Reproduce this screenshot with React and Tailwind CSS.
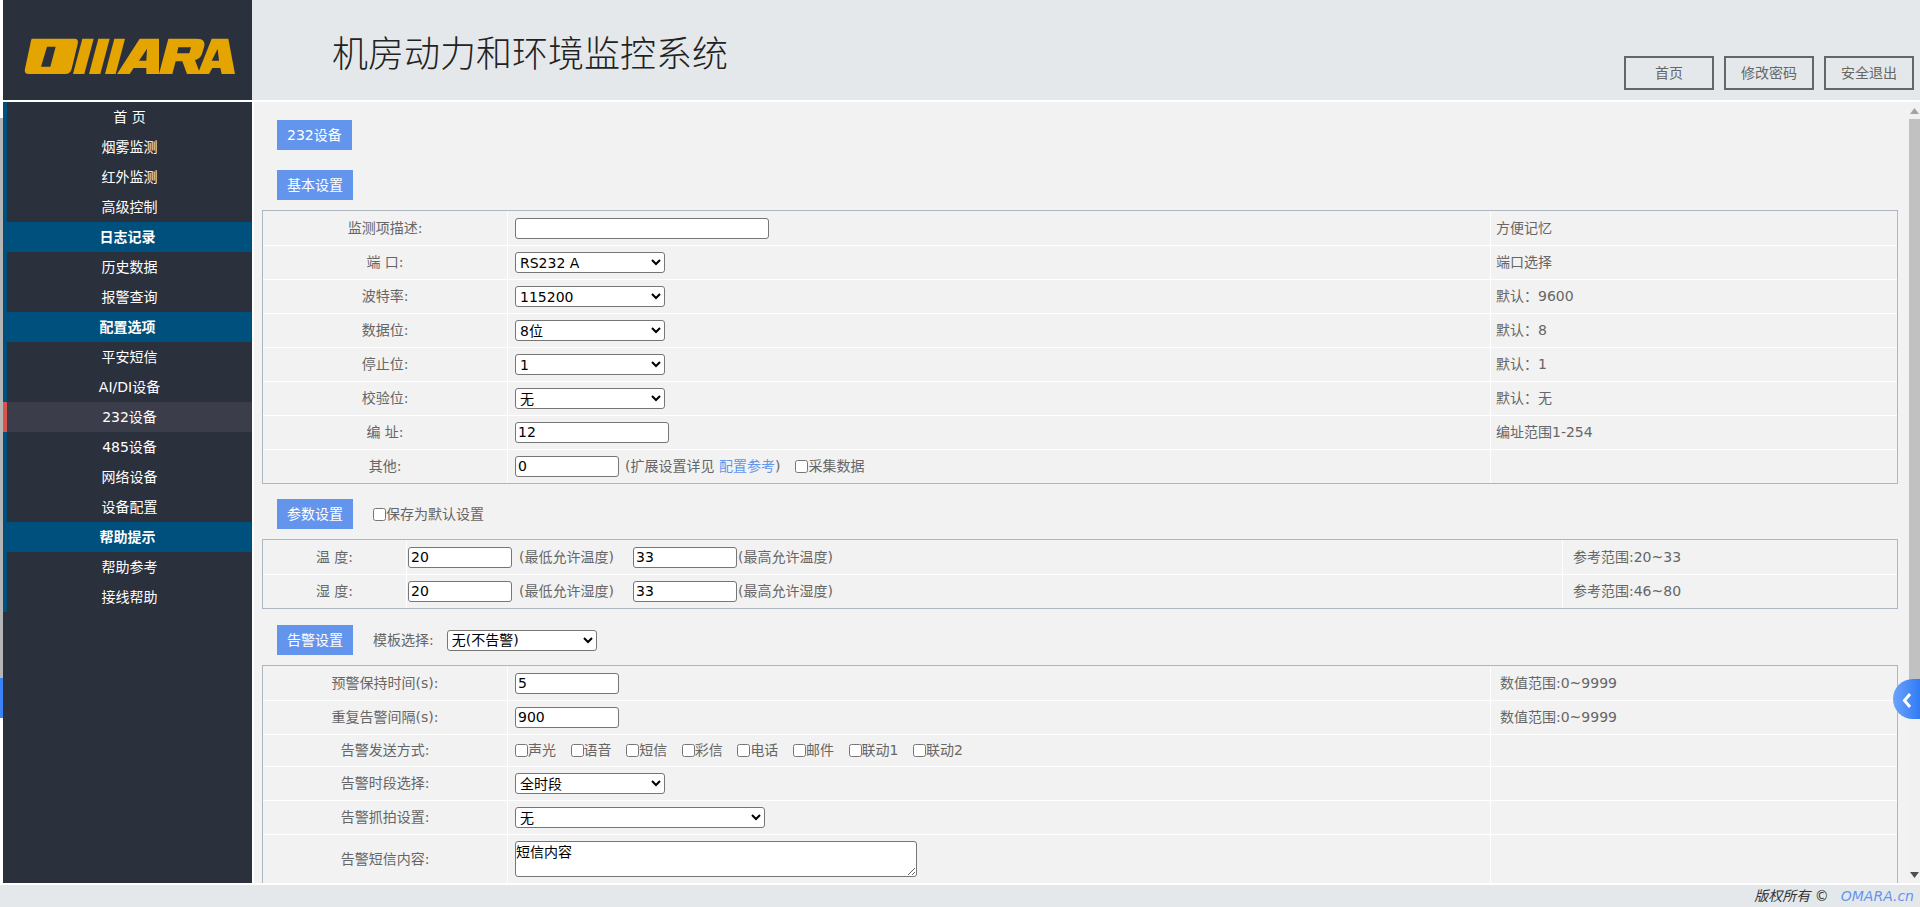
import React from "react";

const menu = [
  ["首 页", 0], ["烟雾监测", 0], ["红外监测", 0], ["高级控制", 0], ["日志记录", 1], ["历史数据", 0], ["报警查询", 0],
  ["配置选项", 1], ["平安短信", 0], ["AI/DI设备", 0], ["232设备", 2], ["485设备", 0], ["网络设备", 0], ["设备配置", 0],
  ["帮助提示", 1], ["帮助参考", 0], ["接线帮助", 0],
];

function Logo() {
  return (
    <svg viewBox="0 0 690 165" className="w-[230px] h-[55px] block" fill="#e5a500" fillRule="evenodd">
      <path d="M50 26 L178 26 Q192 26 188 42 L170 116 Q166 132 150 132 L42 132 Q26 132 30 116 L46 42 Q48 30 50 26 Z M96 50 L122 50 L106 110 L78 110 Z" />
      <path d="M202 26 L236 26 L208 132 L174 132 Z" />
      <path d="M250 26 L284 26 L256 132 L222 132 Z" />
      <path d="M298 26 L330 26 L302 132 L270 132 Z" />
      <path d="M374 26 L432 26 L432 132 L394 132 L394 114 L356 114 L344 132 L306 132 Z M396 56 L372 92 L394 92 Z" />
      <path d="M460 26 L546 26 Q574 26 567 52 L560 74 Q555 86 540 90 L552 122 L590 26 L640 26 L660 132 L620 132 L616 114 L592 114 L582 132 L516 132 L502 94 L482 94 L472 132 L432 132 Z M490 52 L528 52 L523 70 L486 70 Z M608 56 L590 92 L612 92 Z" />
    </svg>
  );
}

function Field({ className = "", value = "" }) {
  return (
    <input
      readOnly
      value={value}
      className={`h-[21px] bg-white border border-[#767676] rounded-[3px] px-[2px] text-black text-[14px] ${className}`}
    />
  );
}

function Drop({ className = "", value }) {
  return (
    <select
      value={value}
      onChange={() => {}}
      className={`h-[21px] bg-white border border-[#767676] rounded-[3px] text-black text-[14px] ${className}`}
    >
      <option>{value}</option>
    </select>
  );
}

function Check({ label, className = "" }) {
  return (
    <label className={`inline-flex items-center text-[#666] ${className}`}>
      <input type="checkbox" className="w-[13px] h-[13px] m-0" />
      <span>{label}</span>
    </label>
  );
}

function Tag({ children, className = "" }) {
  return (
    <div className={`w-fit h-[30px] leading-[30px] px-[10px] bg-[#6495ed] text-white text-[14px] ${className}`}>
      {children}
    </div>
  );
}

function Row({ first, h = "h-[34px]", label, mid, note, notePad = "pl-[5px]", midPad = "pl-[7px]" }) {
  const top = first ? "border-t-transparent" : "border-t-white";
  return (
    <tr>
      <td className={`${h} border-t ${top} border-r border-r-white text-center align-middle text-[#666]`}>{label}</td>
      <td className={`${h} border-t ${top} border-r border-r-white align-middle`}>
        <div className={`flex items-center ${midPad}`}>{mid}</div>
      </td>
      <td className={`${h} border-t ${top} align-middle text-[#666] ${notePad}`}>{note}</td>
    </tr>
  );
}

function Grid({ widths, children }) {
  return (
    <table className="w-full table-fixed border-separate border-spacing-0 border border-[#aeb6c2] text-[14px]">
      <colgroup>
        <col className={widths[0]} />
        <col className={widths[1]} />
        <col />
      </colgroup>
      <tbody>{children}</tbody>
    </table>
  );
}

const basic = [
  ["监测项描述:", <Field className="w-[254px]" />, "方便记忆"],
  ["端 口:", <Drop className="w-[150px]" value="RS232 A" />, "端口选择"],
  ["波特率:", <Drop className="w-[150px]" value="115200" />, "默认：9600"],
  ["数据位:", <Drop className="w-[150px]" value="8位" />, "默认：8"],
  ["停止位:", <Drop className="w-[150px]" value="1" />, "默认：1"],
  ["校验位:", <Drop className="w-[150px]" value="无" />, "默认：无"],
  ["编 址:", <Field className="w-[154px]" value="12" />, "编址范围1-254"],
  [
    "其他:",
    <>
      <Field className="w-[104px]" value="0" />
      <span className="ml-[6px] text-[#666]">(扩展设置详见 <span className="text-[#6495ed]">配置参考</span>)</span>
      <Check className="ml-[15px]" label="采集数据" />
    </>,
    "",
  ],
];

const alarmWays = ["声光", "语音", "短信", "彩信", "电话", "邮件", "联动1", "联动2"];

const alarm = [
  ["预警保持时间(s):", <Field className="w-[104px]" value="5" />, "数值范围:0~9999", "h-[34px]"],
  ["重复告警间隔(s):", <Field className="w-[104px]" value="900" />, "数值范围:0~9999", "h-[34px]"],
  [
    "告警发送方式:",
    <div className="flex gap-[14.6px]">
      {alarmWays.map((w) => (
        <Check key={w} label={w} />
      ))}
    </div>,
    "",
    "h-[32px]",
  ],
  ["告警时段选择:", <Drop className="w-[150px]" value="全时段" />, "", "h-[34px]"],
  ["告警抓拍设置:", <Drop className="w-[250px]" value="无" />, "", "h-[34px]"],
  [
    "告警短信内容:",
    <textarea
      readOnly
      value="短信内容"
      className="block w-[402px] h-[36px] bg-white border border-[#767676] rounded-[3px] text-black text-[14px] leading-[20px]"
    />,
    "",
    "h-[49px]",
  ],
];

function TempRow({ first, label, a, b, note }) {
  const top = first ? "border-t-transparent" : "border-t-white";
  return (
    <tr>
      <td className={`h-[34px] border-t ${top} border-r border-r-white text-center text-[#666]`}>{label}</td>
      <td className={`h-[34px] border-t ${top} border-r border-r-white`}>
        <div className="flex items-center pl-[1px] text-[#666]">
          <Field className="w-[104px]" value="20" />
          <span className="ml-[7px] w-[114px]">{a}</span>
          <Field className="w-[104px]" value="33" />
          <span className="ml-[1px]">{b}</span>
        </div>
      </td>
      <td className={`h-[34px] border-t ${top} pl-[10px] text-[#666]`}>{note}</td>
    </tr>
  );
}

export default function App() {
  return (
    <div className="w-[1920px] h-[907px] overflow-hidden flex flex-col bg-white font-['DejaVu_Sans','Noto_Sans_CJK_SC',sans-serif]">
      <header className="h-[100px] flex shrink-0">
        <div className="w-[3px] bg-white" />
        <div className="w-[249px] bg-[#2b303d] flex items-center pl-[12px] pt-[14px]">
          <Logo />
        </div>
        <div className="flex-1 bg-[#e4e8eb] flex justify-between">
          <h1 className="pl-[80px] pt-[26px] text-[36px] leading-[50px] font-light text-[#222] font-['Noto_Sans_CJK_SC',sans-serif]">
            机房动力和环境监控系统
          </h1>
          <div className="flex items-end gap-[10px] pb-[10px] pr-[6px]">
            {["首页", "修改密码", "安全退出"].map((t) => (
              <div key={t} className="w-[90px] h-[34px] border-2 border-[#666] flex items-center justify-center text-[14px] text-[#666]">
                {t}
              </div>
            ))}
          </div>
        </div>
      </header>
      <div className="h-[2px] bg-white shrink-0" />
      <div className="h-[781px] flex shrink-0">
        <div className="w-[3px] flex flex-col">
          <div className="h-[16px] bg-white" />
          <div className="h-[560px] bg-[#b5b5b5]" />
          <div className="h-[40px] bg-[#3b82f6]" />
        </div>
        <nav className="w-[249px] bg-[#2b303d] text-white text-[14px]">
          {menu.map(([t, k]) => (
            <div
              key={t}
              className={
                k === 1
                  ? "h-[30px] leading-[30px] text-center font-bold bg-[#00507d]"
                  : k === 2
                  ? "h-[30px] leading-[30px] text-center border-l-4 border-[#d9534f] bg-[#3b3d4b]"
                  : "h-[30px] leading-[30px] text-center border-l-4 border-[#00507d]"
              }
            >
              {t}
            </div>
          ))}
        </nav>
        <div className="w-[2px] bg-white" />
        <main className="flex-1 relative flex bg-[#f2f2f2] min-w-0">
          <div className="flex-1 min-w-0 overflow-hidden pl-[8px] pr-[11px] pt-[18px] text-[14px]">
            <Tag className="ml-[15px]">232设备</Tag>
            <Tag className="ml-[15px] mt-[20px] mb-[10px]">基本设置</Tag>
            <Grid widths={["w-[245px]", "w-[983px]"]}>
              {basic.map(([l, m, n], i) => (
                <Row key={l} first={i === 0} label={l} mid={m} note={n} />
              ))}
            </Grid>
            <div className="mt-[15px] mb-[10px] flex items-center">
              <Tag className="ml-[15px]">参数设置</Tag>
              <Check className="ml-[20px]" label="保存为默认设置" />
            </div>
            <Grid widths={["w-[144px]", "w-[1156px]"]}>
              <TempRow first label="温 度:" a="(最低允许温度)" b="(最高允许温度)" note="参考范围:20~33" />
              <TempRow label="湿 度:" a="(最低允许湿度)" b="(最高允许湿度)" note="参考范围:46~80" />
            </Grid>
            <div className="mt-[16px] mb-[10px] flex items-center">
              <Tag className="ml-[15px]">告警设置</Tag>
              <span className="ml-[20px] text-[#666]">模板选择:</span>
              <Drop className="ml-[13px] w-[150px]" value="无(不告警)" />
            </div>
            <Grid widths={["w-[245px]", "w-[983px]"]}>
              {alarm.map(([l, m, n, h], i) => (
                <Row key={l} first={i === 0} label={l} mid={m} note={n} h={h} notePad="pl-[9px]" />
              ))}
            </Grid>
          </div>
          <div className="w-[11px] shrink-0 bg-[#f1f1f1] flex flex-col">
            <div className="h-[17px] flex items-center justify-center">
              <svg width="9" height="6" viewBox="0 0 9 6"><path d="M4.5 0 L9 6 L0 6 Z" fill="#a3a3a3" /></svg>
            </div>
            <div className="h-[581px] bg-[#c1c1c1]" />
            <div className="flex-1" />
            <div className="h-[17px] flex items-center justify-center">
              <svg width="9" height="6" viewBox="0 0 9 6"><path d="M0 0 L9 0 L4.5 6 Z" fill="#505050" /></svg>
            </div>
          </div>
          <div className="absolute right-0 top-[577px] w-[27px] h-[40px] rounded-l-[20px] bg-gradient-to-r from-[#6ca3fb] to-[#2f7bf5] flex items-center justify-center">
            <svg width="10" height="17" viewBox="0 0 10 17" className="mt-[2px]">
              <path d="M8 2 L2.5 8.5 L8 15" fill="none" stroke="#fff" strokeWidth="3" />
            </svg>
          </div>
        </main>
      </div>
      <div className="h-[2px] bg-white shrink-0" />
      <footer className="flex-1 bg-[#e4e8eb] flex items-center justify-end pr-[6px] text-[14px] italic text-[#333]">
        <span>版权所有 ©</span>
        <span className="ml-[12px] text-[#6495ed]">OMARA.cn</span>
      </footer>
    </div>
  );
}
